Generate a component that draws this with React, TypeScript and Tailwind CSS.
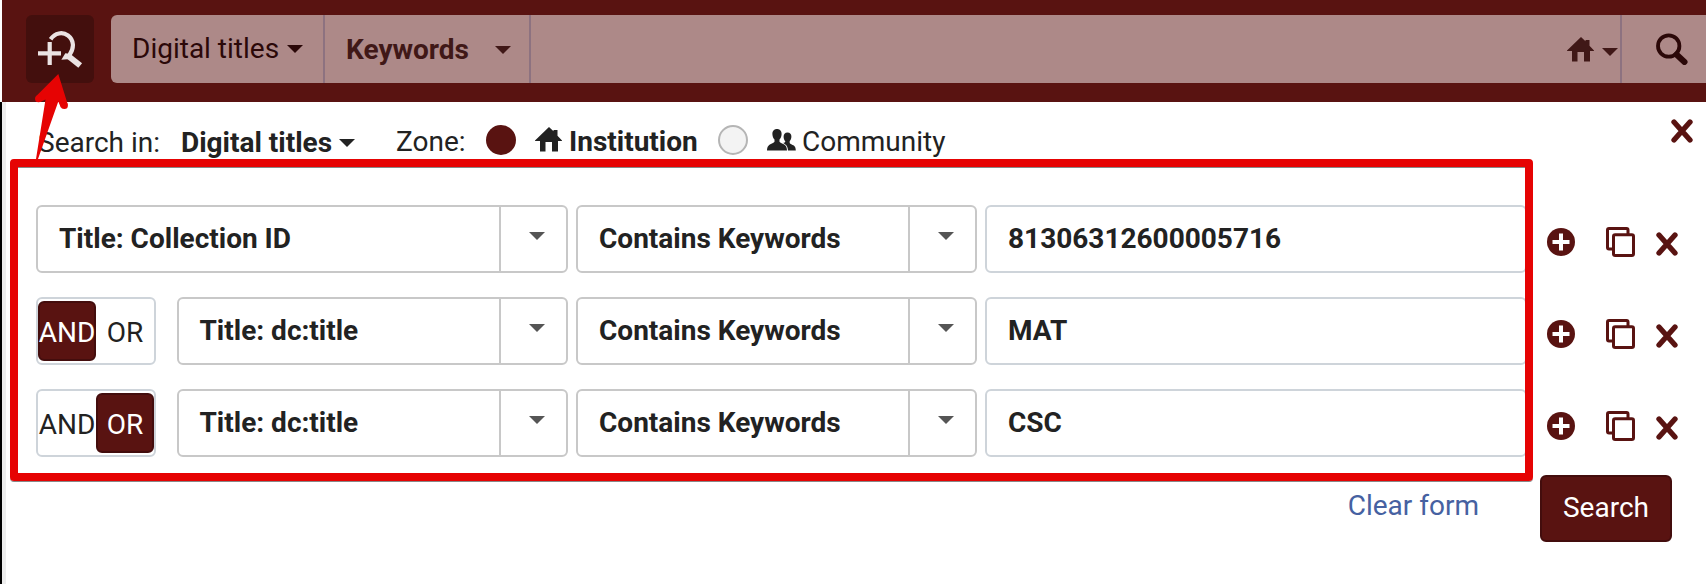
import React from "react";

type IconProps = { className?: string };

const Caret = ({ className = "" }: IconProps) => (
  <svg viewBox="0 0 16 8" className={`h-2 w-4 shrink-0 ${className}`} fill="currentColor">
    <path d="M0 0h16L8 8z" />
  </svg>
);

const Home = ({ className = "" }: IconProps) => (
  <svg viewBox="0 0 27 25" className={`h-[25px] w-[27px] shrink-0 ${className}`} fill="currentColor">
    <path d="M14 0L18.5 4.2V3H22.5V8.7L27 13.5V14H23V24.5H17V15H10.5V24.5H5V14H0V13.5z" />
  </svg>
);

const People = ({ className = "" }: IconProps) => (
  <svg viewBox="0 0 29 22" className={`h-[22px] w-[29px] shrink-0 ${className}`} fill="currentColor">
    <path d="M10 0c3 0 4.700 2.200 4.600 5.200-.1 2.300-.9 4-2.100 5.200v2.400c0 .8 4.900 2.300 6.300 4.100.8 1.100 1.100 2.800 1.200 4.600H0c0-2 .4-3.600 1.300-4.600 1.500-1.700 6.200-3.300 6.200-4.100v-2.400C6.200 9.200 5.500 7.500 5.400 5.200 5.300 2.200 7 0 10 0z" />
    <path d="M20.500 3.500c2.600 0 4 1.900 3.900 4.300-.1 1.900-.7 3.300-1.700 4.300v2c0 .8 3.800 1.900 5 3.400.8 1 1 2.400 1.100 4H21c-.1-2.600-.9-4.700-2.700-6-.9-.7-1.900-1.100-1.900-1.700 1.400 0 1.900-.6 1.900-1.500-1-1-1.700-2.600-1.700-4.500 0-2.400 1.300-4.300 3.900-4.300z" />
  </svg>
);

const Cross = ({ className = "" }: IconProps) => (
  <svg viewBox="0 0 22 24" className={`h-6 w-[22px] shrink-0 ${className}`} fill="none" stroke="currentColor" strokeWidth="5.300" strokeLinecap="round">
    <path d="M3 3L19 21M19 3L3 21" />
  </svg>
);

const PlusCircle = ({ className = "" }: IconProps) => (
  <svg viewBox="0 0 28 28" className={`size-7 shrink-0 ${className}`}>
    <circle cx="14" cy="14" r="14" fill="currentColor" />
    <path d="M14 5.500V22.500M5.500 14H22.500" stroke="#fff" strokeWidth="4" />
  </svg>
);

const Copy = ({ className = "" }: IconProps) => (
  <svg viewBox="0 0 29 30" className={`h-[30px] w-[29px] shrink-0 ${className}`} fill="none" stroke="currentColor" strokeWidth="3">
    <path d="M22 7V3Q22 1.500 20.500 1.500H3Q1.500 1.500 1.500 3V20.500Q1.500 22 3 22H7" />
    <rect x="7.500" y="7.700" width="20" height="20.800" rx="1.700" />
  </svg>
);

const Lens = ({ className = "" }: IconProps) => (
  <svg viewBox="0 0 32 32" className={`size-8 shrink-0 ${className}`} fill="none" stroke="currentColor">
    <circle cx="12.700" cy="13" r="10.700" strokeWidth="3.800" />
    <path d="M20.500 21.500L28.500 29" strokeWidth="6" strokeLinecap="round" />
  </svg>
);

const LensPlus = () => (
  <svg viewBox="0 0 46 38" className="h-[38px] w-[46px]" fill="none" stroke="#ebe3e3">
    <path d="M11.700 11V34M0 22.300H23" strokeWidth="4.200" />
    <path d="M12.600 8.200C17 1.800 24.500 .500 30 4.500C36 9 36.500 17 31.500 24" strokeWidth="4.200" />
    <path d="M23.400 28.800L27.300 22.200L33.500 23L33 28z" fill="#ebe3e3" stroke="none" />
    <path d="M29 24L42.200 34.500" strokeWidth="6" />
  </svg>
);

const Select = ({ label, width }: { label: string; width: string }) => (
  <div className={`flex h-[68px] shrink-0 rounded-md border-2 border-[#c8c8c8] ${width}`}>
    <div className="flex-1 pl-[21px] font-bold leading-[64px]">{label}</div>
    <div className="flex w-[67px] border-l-2 border-[#c8c8c8] pl-7 pt-[25px] text-[#555]">
      <Caret />
    </div>
  </div>
);

const Toggle = ({ value }: { value: "AND" | "OR" }) => (
  <div className="mr-[20.500px] flex h-[68px] w-[120px] shrink-0 rounded-md border-2 border-[#ced4da] pt-0.5">
    {(["AND", "OR"] as const).map((option) => (
      <div
        key={option}
        className={`flex h-[60px] w-[58px] items-center justify-center rounded-md border-2 pt-1 ${
          option === value ? "border-[#430d0d] bg-[#591311] text-white" : "border-transparent"
        }`}
      >
        {option}
      </div>
    ))}
  </div>
);

const rows: { op?: "AND" | "OR"; field: string; value: string }[] = [
  { field: "Title: Collection ID", value: "81306312600005716" },
  { op: "AND", field: "Title: dc:title", value: "MAT" },
  { op: "OR", field: "Title: dc:title", value: "CSC" },
];

export default function App() {
  return (
    <div className="relative h-[584px] w-[1706px] overflow-hidden whitespace-nowrap bg-white font-['Roboto',sans-serif] text-[28px] text-[#222]">
      <header className="ml-0.5 flex h-[102px] bg-[#591311] pl-6 pt-[15px]">
        <button className="mr-[17px] flex h-[68px] w-[68px] shrink-0 rounded-md bg-[#430f0d] pl-3 pt-4">
          <LensPlus />
        </button>
        <div className="flex h-[68px] flex-1 rounded-l-md bg-[#ad8988] text-[#2b0808]">
          <div className="flex w-[214px] items-center border-r-2 border-[#8d7280] pl-[21px]">
            <span className="w-[155px]">Digital titles</span>
            <Caret />
          </div>
          <div className="flex w-[206px] items-center border-r-2 border-[#8d7280] pl-[21px] text-[#401817]">
            <span className="w-[149px] pt-0.5 font-bold">Keywords</span>
            <Caret className="mt-0.5" />
          </div>
          <div className="flex flex-1 items-center justify-end border-r-2 border-[#8d7280] pr-0.5 text-[#401817]">
            <Home className="mr-2" />
            <Caret className="mt-1.5" />
          </div>
          <div className="flex w-[84px] items-center pl-[34px]">
            <Lens />
          </div>
        </div>
      </header>

      <main className="flex h-[482px] flex-col border-l-2 border-black">
        <div className="flex flex-1 flex-col border-l-4 border-[#ededed] pl-[30px]">
          <div className="flex h-[103px] pt-[17px]">
            <div className="flex h-[46px] flex-1 items-center">
              <span className="w-[145px] pl-0.5 pt-px">Search in:</span>
              <span className="w-[158px] pt-px font-bold">Digital titles</span>
              <Caret className="mr-[41px] mt-0.5" />
              <span className="w-[90px]">Zone:</span>
              <span className="mb-1 size-[30px] shrink-0 rounded-full bg-[#591311]" />
              <Home className="mb-[5px] ml-[19px]" />
              <span className="ml-[7px] w-[149px] font-bold">Institution</span>
              <span className="mb-1 size-[30px] shrink-0 rounded-full border-2 border-[#b5b5b5] bg-[#f3f3f3]" />
              <People className="mb-1 ml-[19px]" />
              <span className="ml-1.5">Community</span>
            </div>
            <button className="mr-[13px] h-6 text-[#591311]">
              <Cross />
            </button>
          </div>

          <div className="flex flex-col gap-6">
            {rows.map((row, i) => (
              <div key={i} className="flex h-[68px]">
                {row.op && <Toggle value={row.op} />}
                <Select label={row.field} width={row.op ? "w-[391.500px]" : "w-[532px]"} />
                <div className="w-2 shrink-0" />
                <Select label="Contains Keywords" width="w-[401px]" />
                <div className="ml-2 h-[68px] w-[542px] shrink-0 rounded-md border-2 border-[#ced4da] pl-[21px] font-bold leading-[64px]">
                  {row.value}
                </div>
                <div className="ml-5 flex items-start text-[#591311]">
                  <PlusCircle className="mt-[23px]" />
                  <Copy className="ml-[31px] mt-[22px]" />
                  <Cross className="ml-[21px] mt-[27px]" />
                </div>
              </div>
            ))}
          </div>

          <div className="mt-[18px] flex justify-end pr-[34px]">
            <a className="mr-[61px] leading-[62px] text-[#4661a1]">Clear form</a>
            <button className="h-[67px] w-[132px] rounded-md border-2 border-[#430d0d] bg-[#591311] pb-0.5 text-white">
              Search
            </button>
          </div>
        </div>
      </main>

      <div className="pointer-events-none absolute left-[10px] top-[159px] h-[322px] w-[1523px] rounded-[4px] border-8 border-[#e60303] shadow-[0_1px_0_#888,inset_0_1px_0_#888]" />
      <svg className="pointer-events-none absolute left-0 top-0 h-[170px] w-[80px]" viewBox="0 0 80 170" fill="#e60303">
        <path d="M58.300 74L67.800 104.500L60.800 107.500L58.300 101.500L38 159H36L45.500 99.500L40 102L36.300 96z" />
        <circle cx="38.500" cy="98.700" r="3.500" />
        <circle cx="64.300" cy="105.500" r="3.600" />
      </svg>
    </div>
  );
}
